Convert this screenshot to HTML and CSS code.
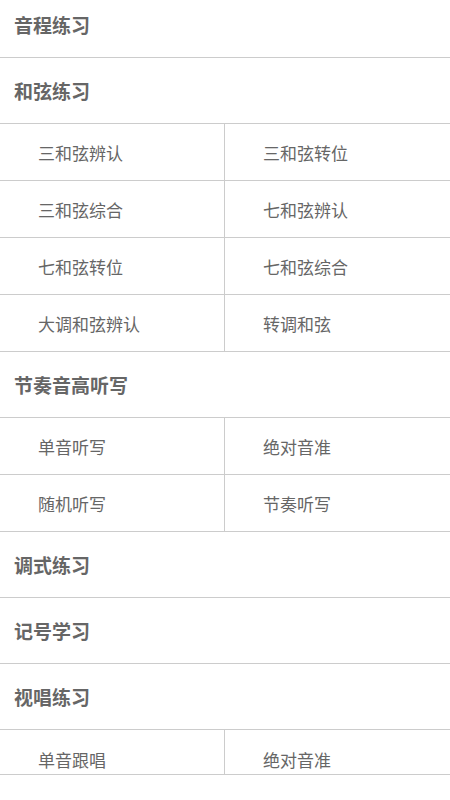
FILE: index.html
```html
<!DOCTYPE html>
<html lang="zh-CN">
<head>
  <meta charset="UTF-8">
  <meta name="viewport" content="width=device-width, initial-scale=1.0">
  <title>练耳</title>
  <link rel="stylesheet" href="styles.css">
</head>
<body>
  <div class="menu">
    <div class="section-title">音程练习</div>

    <div class="section-title">和弦练习</div>
    <div class="item-grid">
      <div class="item">三和弦辨认</div>
      <div class="item">三和弦转位</div>
      <div class="item">三和弦综合</div>
      <div class="item">七和弦辨认</div>
      <div class="item">七和弦转位</div>
      <div class="item">七和弦综合</div>
      <div class="item">大调和弦辨认</div>
      <div class="item">转调和弦</div>
    </div>

    <div class="section-title">节奏音高听写</div>
    <div class="item-grid">
      <div class="item">单音听写</div>
      <div class="item">绝对音准</div>
      <div class="item">随机听写</div>
      <div class="item">节奏听写</div>
    </div>

    <div class="section-title">调式练习</div>
    <div class="section-title">记号学习</div>

    <div class="section-title">视唱练习</div>
    <div class="item-grid last">
      <div class="item">单音跟唱</div>
      <div class="item">绝对音准</div>
    </div>
  </div>
</body>
</html>
```

FILE: styles.css
```css
* {
  margin: 0;
  padding: 0;
  box-sizing: border-box;
}
body {
  background: #fff;
  font-family: "Noto Sans CJK SC", "Noto Sans", sans-serif;
  overflow: hidden;
}
.menu {
  margin-top: -8px;
}
.section-title {
  height: 66px;
  display: flex;
  align-items: center;
  padding-left: 14px;
  font-size: 19px;
  font-weight: bold;
  color: #666;
  border-bottom: 1px solid #ccc;
}
.item-grid {
  display: grid;
  grid-template-columns: 225px 1fr;
}
.item {
  height: 57px;
  display: flex;
  align-items: center;
  padding-left: 38px;
  font-size: 17px;
  color: #666;
  border-bottom: 1px solid #ccc;
}
.item:nth-child(odd) {
  border-right: 1px solid #ccc;
}
.last .item {
  height: 45px;
  padding-top: 15px;
}
```
